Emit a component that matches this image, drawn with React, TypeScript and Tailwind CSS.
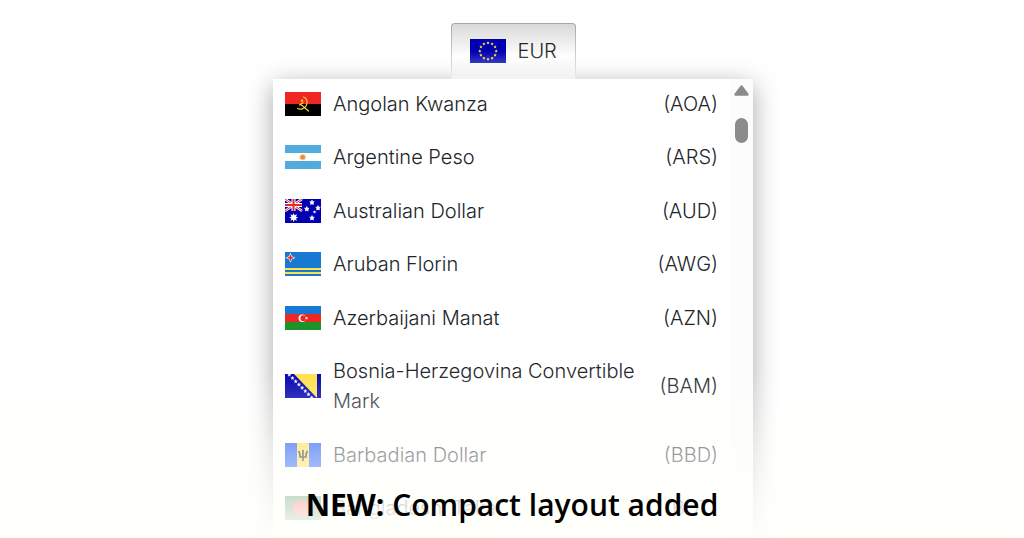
import React from 'react';

interface Currency {
  code: string;
  name: string;
  flag: React.ReactNode;
}

interface FlagProps {
  children: React.ReactNode;
}

const Flag: React.FC<FlagProps> = ({ children }) => (
  <svg viewBox="0 0 36 24" className="h-6 w-9 shrink-0" aria-hidden="true">
    {children}
  </svg>
);

const EU_STARS = Array.from({ length: 12 }, (_, i) => {
  const angle = (i * Math.PI) / 6;
  return { x: 18 + 8.2 * Math.sin(angle), y: 12 - 8.2 * Math.cos(angle) };
});

const star = 'M0 -1.7L.5 -.6L1.6 -.5L.8 .3L1 1.4L0 .9L-1 1.4L-.8 .3L-1.6 -.5L-.5 -.6Z';

const EuroFlag = () => (
  <Flag>
    <rect width="36" height="24" fill="#0000b0" />
    {EU_STARS.map((s, i) => (
      <path key={i} d={star} fill="#f7e03c" transform={`translate(${s.x} ${s.y})`} />
    ))}
  </Flag>
);

const CURRENCIES: Currency[] = [
  {
    code: 'AOA',
    name: 'Angolan Kwanza',
    flag: (
      <Flag>
        <rect width="36" height="24" />
        <rect width="36" height="12" fill="#ee2725" />
        <g fill="none" stroke="#fbd92b" strokeLinecap="round">
          <path d="M18.5 5C22 6 23 10 21.3 13.5C19.5 17 15.5 18 12.5 16.5" strokeWidth="1.2" />
          <path d="M15.5 12.5L18 14.2L23.5 19" strokeWidth="1.2" />
          <path d="M14.5 13L18 10.8" strokeWidth="1.3" />
        </g>
        <path d={star} fill="#fbd92b" transform="translate(17 8.5)" />
      </Flag>
    ),
  },
  {
    code: 'ARS',
    name: 'Argentine Peso',
    flag: (
      <Flag>
        <rect width="36" height="24" fill="#fff" />
        <rect width="36" height="8" fill="#51abdc" />
        <rect y="16" width="36" height="8" fill="#51abdc" />
        <circle cx="17.7" cy="12.2" r="3.2" fill="#f9d2a2" />
        <circle cx="17.7" cy="12.2" r="2.3" fill="#ee8a35" />
      </Flag>
    ),
  },
  {
    code: 'AUD',
    name: 'Australian Dollar',
    flag: (
      <Flag>
        <rect width="36" height="24" fill="#0000b0" />
        <path d="M0 0L17 12M17 0L0 12" stroke="#fff" strokeWidth="2.6" />
        <path d="M0 0L17 12M17 0L0 12" stroke="#ee2725" strokeWidth="1" />
        <path d="M8.5 0V12M0 6H17" stroke="#fff" strokeWidth="4" />
        <path d="M8.5 0V12M0 6H17" stroke="#ee2725" strokeWidth="2" />
        <path
          d="M8.7 14L9.6 16.3L12 15.3L11 17.7L13.2 18.6L11 19.4L12 21.8L9.6 20.8L8.7 23.2L7.8 20.8L5.4 21.8L6.4 19.4L4.2 18.6L6.4 17.7L5.4 15.3L7.8 16.3Z"
          fill="#fff"
        />
        <g fill="#fff" stroke="#fff" strokeWidth=".5">
          <path d={star} transform="translate(27 3.5) scale(1.4)" />
          <path d={star} transform="translate(21.8 10) scale(1.4)" />
          <path d={star} transform="translate(33 9) scale(1.4)" />
          <path d={star} transform="translate(27 19) scale(1.4)" />
          <path d={star} transform="translate(29.5 13) scale(.8)" />
        </g>
      </Flag>
    ),
  },
  {
    code: 'AWG',
    name: 'Aruban Florin',
    flag: (
      <Flag>
        <rect width="36" height="24" fill="#1779d2" />
        <rect y="16" width="36" height="2" fill="#fbe14a" />
        <rect y="20" width="36" height="2" fill="#fbe14a" />
        <path d="M5.5 .8L7 4.3L10.5 5.8L7 7.3L5.5 10.8L4 7.3L.5 5.8L4 4.3Z" fill="#fff" />
        <path d="M5.5 2.2L6.5 4.8L9 5.8L6.5 6.8L5.5 9.4L4.5 6.8L2 5.8L4.5 4.8Z" fill="#ee2725" />
      </Flag>
    ),
  },
  {
    code: 'AZN',
    name: 'Azerbaijani Manat',
    flag: (
      <Flag>
        <rect width="36" height="8" fill="#1779d2" />
        <rect y="8" width="36" height="8" fill="#ee2725" />
        <rect y="16" width="36" height="8" fill="#1c942b" />
        <circle cx="17.3" cy="12.2" r="3.7" fill="#fff" />
        <circle cx="18.4" cy="12.2" r="3" fill="#ee2725" />
        <path d={star} fill="#fff" transform="translate(21.5 12.2)" />
      </Flag>
    ),
  },
  {
    code: 'BAM',
    name: 'Bosnia-Herzegovina Convertible Mark',
    flag: (
      <Flag>
        <rect width="36" height="24" fill="#0000b0" />
        <path d="M9 0H32V24Z" fill="#ffe04a" />
        {[0, 1, 2, 3, 4, 5, 6, 7].map((i) => (
          <path
            key={i}
            d={star}
            fill="#fff"
            stroke="#fff"
            strokeWidth=".4"
            transform={`translate(${4.3 + i * 3.2} ${0.8 + i * 3.25})`}
          />
        ))}
      </Flag>
    ),
  },
  {
    code: 'BBD',
    name: 'Barbadian Dollar',
    flag: (
      <Flag>
        <rect width="36" height="24" fill="#0748f4" />
        <rect x="12" width="12" height="24" fill="#fedb42" />
        <path
          d="M18 7V18M13.5 8C14.5 9 15 12 15 14H21C21 12 21.5 9 22.5 8"
          fill="none"
          stroke="#111"
          strokeWidth="1.6"
        />
      </Flag>
    ),
  },
  {
    code: 'BDT',
    name: 'Bangladeshi Taka',
    flag: (
      <Flag>
        <rect width="36" height="24" fill="#146b2a" />
        <circle cx="16" cy="12" r="8.5" fill="#ee2725" />
      </Flag>
    ),
  },
];

const CurrencyButton: React.FC = () => (
  <div className="relative z-10 mx-auto w-[125px] rounded-t bg-linear-to-b from-[#a6a6a6] to-[#ececec] px-px pt-px">
    <button
      type="button"
      aria-haspopup="listbox"
      aria-expanded="true"
      className="relative flex h-[55px] w-full items-center gap-3 rounded-t-[3px] bg-linear-to-b from-[#d9d9d9] via-white via-60% to-[#e6e6e6] pb-0.5 pl-[18px] text-[20px] text-[#212529]"
    >
      <EuroFlag />
      EUR
      <span className="absolute inset-x-0 bottom-0 h-7 bg-linear-to-b from-white/0 to-white/50" />
    </button>
  </div>
);

const ScrollBar: React.FC = () => (
  <div aria-hidden="true" className="flex w-[23px] shrink-0 flex-col items-center bg-[#fcfcfc] pt-1.5">
    <svg viewBox="0 0 15 11" className="h-[11px] w-[15px]">
      <path d="M7.5 1.5L13.5 9.5H1.5Z" fill="#8b8b8b" stroke="#8b8b8b" strokeWidth="2.4" strokeLinejoin="round" />
    </svg>
    <div className="mt-[22px] h-[25px] w-[13px] rounded-full bg-[#8b8b8b]" />
  </div>
);

const App: React.FC = () => {
  return (
    <main className="relative min-h-screen overflow-hidden bg-white pt-[23px] pl-0.5 font-['Inter',sans-serif] font-light">
      <CurrencyButton />
      <div className="mx-auto flex max-w-[480px] bg-white pl-3 shadow-[0_6px_24px_rgba(0,0,0,0.35)]">
        <ul
          role="listbox"
          aria-label="Currency"
          className="mr-3 flex h-[460px] flex-1 flex-col justify-between pt-2.5 pb-4"
        >
          {CURRENCIES.map((currency) => (
            <li
              key={currency.code}
              role="option"
              aria-selected="false"
              className="flex items-center gap-3 text-[20px] leading-[30px] text-[#212529]"
            >
              {currency.flag}
              <span className="flex-1">{currency.name}</span>
              <span>({currency.code})</span>
            </li>
          ))}
        </ul>
        <ScrollBar />
      </div>

      {/* fades the end of the list into the caption */}
      <div className="pointer-events-none absolute inset-x-0 bottom-0 z-20 h-[170px] bg-linear-to-b from-[#fffffc]/0 via-[#fffffc]/55 via-50% to-[#fffffa]" />
      <p className="absolute inset-x-0 bottom-3 z-30 text-center font-['Open_Sans',sans-serif] text-[30px] leading-[44px] font-semibold text-black">
        <strong className="font-bold">NEW:</strong> Compact layout added
      </p>
    </main>
  );
};

export default App;
